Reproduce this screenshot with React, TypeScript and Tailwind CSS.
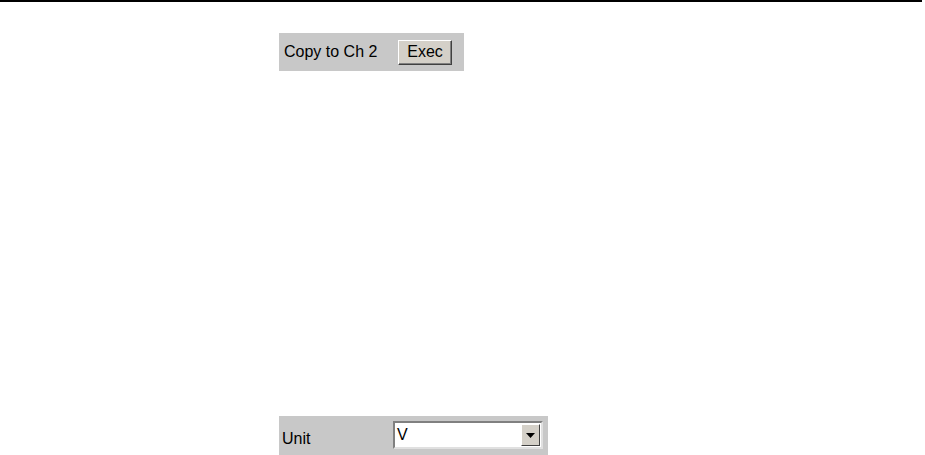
export default function App() {
  return (
    <div className="w-[925px] h-[455px] bg-white overflow-hidden flex flex-col" style={{ fontFamily: '"Liberation Sans", Arial, sans-serif' }}>
      <div className="h-[2px] w-[922px] bg-black" />

      {/* Copy panel */}
      <div className="ml-[279px] mt-[31px] w-[185px] h-[38px] bg-[#c8c8c8] flex items-center pl-[5px]">
        <span className="text-[16px] text-black leading-none w-[114px]">Copy to Ch 2</span>
        <button className="h-[25px] w-[54px] bg-[#d4d0c8] text-[16px] leading-none text-black border border-t-white border-l-white border-r-[#404040] border-b-[#404040] shadow-[inset_-1px_-1px_0_#808080]">
          Exec
        </button>
      </div>

      {/* Unit panel */}
      <div className="ml-[279px] mt-[345px] w-[269px] flex-1 bg-[#c8c8c8] flex items-start pt-[5px] pl-[3px]">
        <span className="text-[16px] text-black leading-none w-[111px] mt-[10px]">Unit</span>
        <div className="w-[150px] h-[28px] bg-white border-2 border-t-[#808080] border-l-[#808080] border-r-[#e0e0e0] border-b-[#e0e0e0] flex items-center">
          <span className="flex-1 pl-[2px] text-[16px] leading-none text-black">V</span>
          <div className="w-[19px] h-[22px] mr-[1px] bg-[#d4d0c8] border border-t-white border-l-white border-r-[#404040] border-b-[#404040] flex items-center justify-center">
            <svg width="9" height="5" viewBox="0 0 9 5">
              <path d="M0 0h9L4.5 5z" fill="#000" />
            </svg>
          </div>
        </div>
      </div>
    </div>
  )
}
